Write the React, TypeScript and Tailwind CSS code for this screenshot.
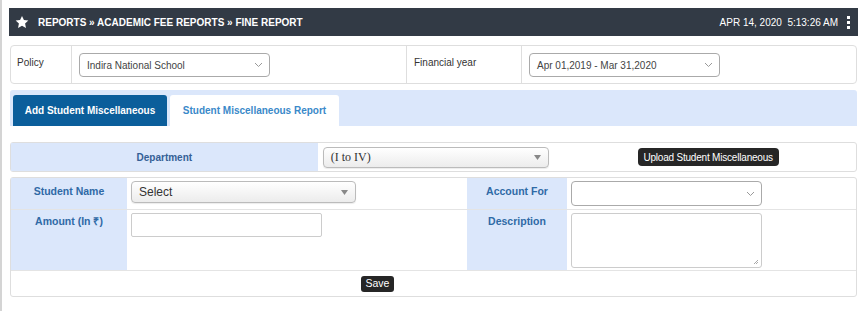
import React from "react";

const font = { fontFamily: '"Liberation Sans", Arial, sans-serif' };

function Chevron() {
  return (
    <svg width="9" height="6" viewBox="0 0 9 6" className="text-[#999]">
      <path d="M1 1l3.5 3.5L8 1" fill="none" stroke="currentColor" strokeWidth="1" />
    </svg>
  );
}

function Tri() {
  return (
    <svg width="7" height="5" viewBox="0 0 7 5">
      <path d="M0 0h7L3.5 5z" fill="#888" />
    </svg>
  );
}

export default function App() {
  return (
    <div style={font} className="min-h-[311px] border-l-2 border-[#d4d4d4] bg-white pl-[7px] pr-[7px] pt-[8px] text-[10px] text-[#333]">
      {/* Header */}
      <div className="flex h-[28px] items-center bg-[#323a45] pl-[6px] pr-[8px] text-white">
        <svg width="14" height="14" viewBox="0 0 24 24" className="mr-[9px]">
          <path fill="#fff" d="M12 1.5l3.3 7 7.6.9-5.6 5.2 1.5 7.5L12 18.3 5.2 22.1l1.5-7.5L1.1 9.4l7.6-.9z" />
        </svg>
        <span className="font-bold text-[10px]">REPORTS » ACADEMIC FEE REPORTS » FINE REPORT</span>
        <span className="ml-auto text-[10px]">APR 14, 2020&nbsp;&nbsp;5:13:26 AM</span>
        <span className="ml-[9px] flex flex-col gap-[2px]">
          <span className="block h-[3px] w-[3px] bg-white" />
          <span className="block h-[3px] w-[3px] bg-white" />
          <span className="block h-[3px] w-[3px] bg-white" />
        </span>
      </div>

      {/* Policy row */}
      <div className="mx-[1px] mt-[9px] flex h-[39px] rounded-[4px] border border-[#dedede]">
        <div className="w-[61px] border-r border-[#dedede] pl-[6px] pt-[9px]">Policy</div>
        <div className="w-[335px] border-r border-[#dedede] pl-[7px] pt-[7px]">
          <div className="flex h-[24px] w-[191px] items-center justify-between rounded-[4px] border border-[#aaa] pl-[7px] pr-[6px] text-[#444]">
            <span>Indira National School</span>
            <Chevron />
          </div>
        </div>
        <div className="w-[115px] border-r border-[#dedede] pl-[7px] pt-[9px]">Financial year</div>
        <div className="flex-1 pl-[7px] pt-[7px]">
          <div className="flex h-[24px] w-[191px] items-center justify-between rounded-[4px] border border-[#aaa] pl-[7px] pr-[6px] text-[#444]">
            <span>Apr 01,2019 - Mar 31,2020</span>
            <Chevron />
          </div>
        </div>
      </div>

      {/* Tabs */}
      <div className="mx-[1px] mt-[6px] flex h-[36px] items-end rounded-t-[3px] bg-[#dbe7fb] pl-[3px]">
        <div className="flex h-[31px] w-[154px] items-center justify-center rounded-t-[3px] bg-[#0b5e9b] font-bold text-white">
          Add Student Miscellaneous
        </div>
        <div className="ml-[3px] flex h-[31px] w-[169px] items-center justify-center rounded-t-[3px] bg-white font-bold text-[#3a89c9]">
          Student Miscellaneous Report
        </div>
      </div>

      {/* Department row */}
      <div className="mx-[1px] mt-[16px] flex h-[30px] rounded-[3px] border border-[#dedede]">
        <div className="flex w-[307px] items-center justify-center bg-[#dbe7fb] font-bold text-[#346096]">
          Department
        </div>
        <div className="flex w-[539px] items-center pl-[5px]">
          <div className="flex h-[21px] w-[226px] items-center justify-between rounded-[4px] border border-[#bbb] bg-gradient-to-b from-white to-[#ececec] pl-[7px] pr-[7px] shadow-[0_1px_1px_rgba(0,0,0,0.08)]">
            <span style={{ fontFamily: '"Liberation Serif", serif' }} className="text-[12px] text-[#333]">(I to IV)</span>
            <Tri />
          </div>
          <div className="ml-[89px] flex h-[18px] w-[141px] items-center justify-center rounded-[4px] bg-[#262626] text-[10px] tracking-[-0.2px] text-white">
            Upload Student Miscellaneous
          </div>
        </div>
      </div>

      {/* Form table */}
      <div className="mx-[1px] mt-[5px] rounded-[3px] border border-[#dedede]">
        <div className="flex h-[32px] border-b border-[#e4e4e4]">
          <div className="w-[116px] bg-[#dbe7fb] pt-[6px] text-center text-[10.5px] font-bold text-[#2f6aa6]">Student Name</div>
          <div className="w-[340px] pl-[4px] pt-[3px]">
            <div className="flex h-[22px] w-[225px] items-center justify-between rounded-[4px] border border-[#bbb] bg-gradient-to-b from-white to-[#ececec] pl-[7px] pr-[7px] text-[12px] text-[#333] shadow-[0_1px_1px_rgba(0,0,0,0.08)]">
              <span>Select</span>
              <Tri />
            </div>
          </div>
          <div className="w-[100px] bg-[#dbe7fb] pt-[6px] text-center text-[10.5px] font-bold text-[#2f6aa6]">Account For</div>
          <div className="flex-1 pl-[4px] pt-[3px]">
            <div className="flex h-[25px] w-[191px] items-center justify-end rounded-[4px] border border-[#aaa] pr-[6px]">
              <Chevron />
            </div>
          </div>
        </div>
        <div className="flex h-[61px] border-b border-[#e4e4e4]">
          <div className="w-[116px] bg-[#dbe7fb] pt-[4px] text-center text-[10.5px] font-bold text-[#2f6aa6]">Amount (In ₹)</div>
          <div className="w-[340px] pl-[4px] pt-[3px]">
            <div className="h-[24px] w-[191px] rounded-[2px] border border-[#ccc]" />
          </div>
          <div className="w-[100px] bg-[#dbe7fb] pt-[4px] text-center text-[10.5px] font-bold text-[#2f6aa6]">Description</div>
          <div className="flex-1 pl-[4px] pt-[3px]">
            <div className="relative h-[55px] w-[191px] rounded-[3px] border border-[#ccc]">
              <svg width="6" height="6" viewBox="0 0 6 6" className="absolute bottom-[2px] right-[2px]">
                <path d="M5 1L1 5M5 3L3 5" stroke="#aaa" strokeWidth="1" />
              </svg>
            </div>
          </div>
        </div>
        <div className="flex h-[25px] items-center pl-[350px]">
          <div className="flex h-[16px] w-[33px] items-center justify-center rounded-[3px] bg-[#262626] text-[10.5px] text-white">
            Save
          </div>
        </div>
      </div>
    </div>
  );
}
